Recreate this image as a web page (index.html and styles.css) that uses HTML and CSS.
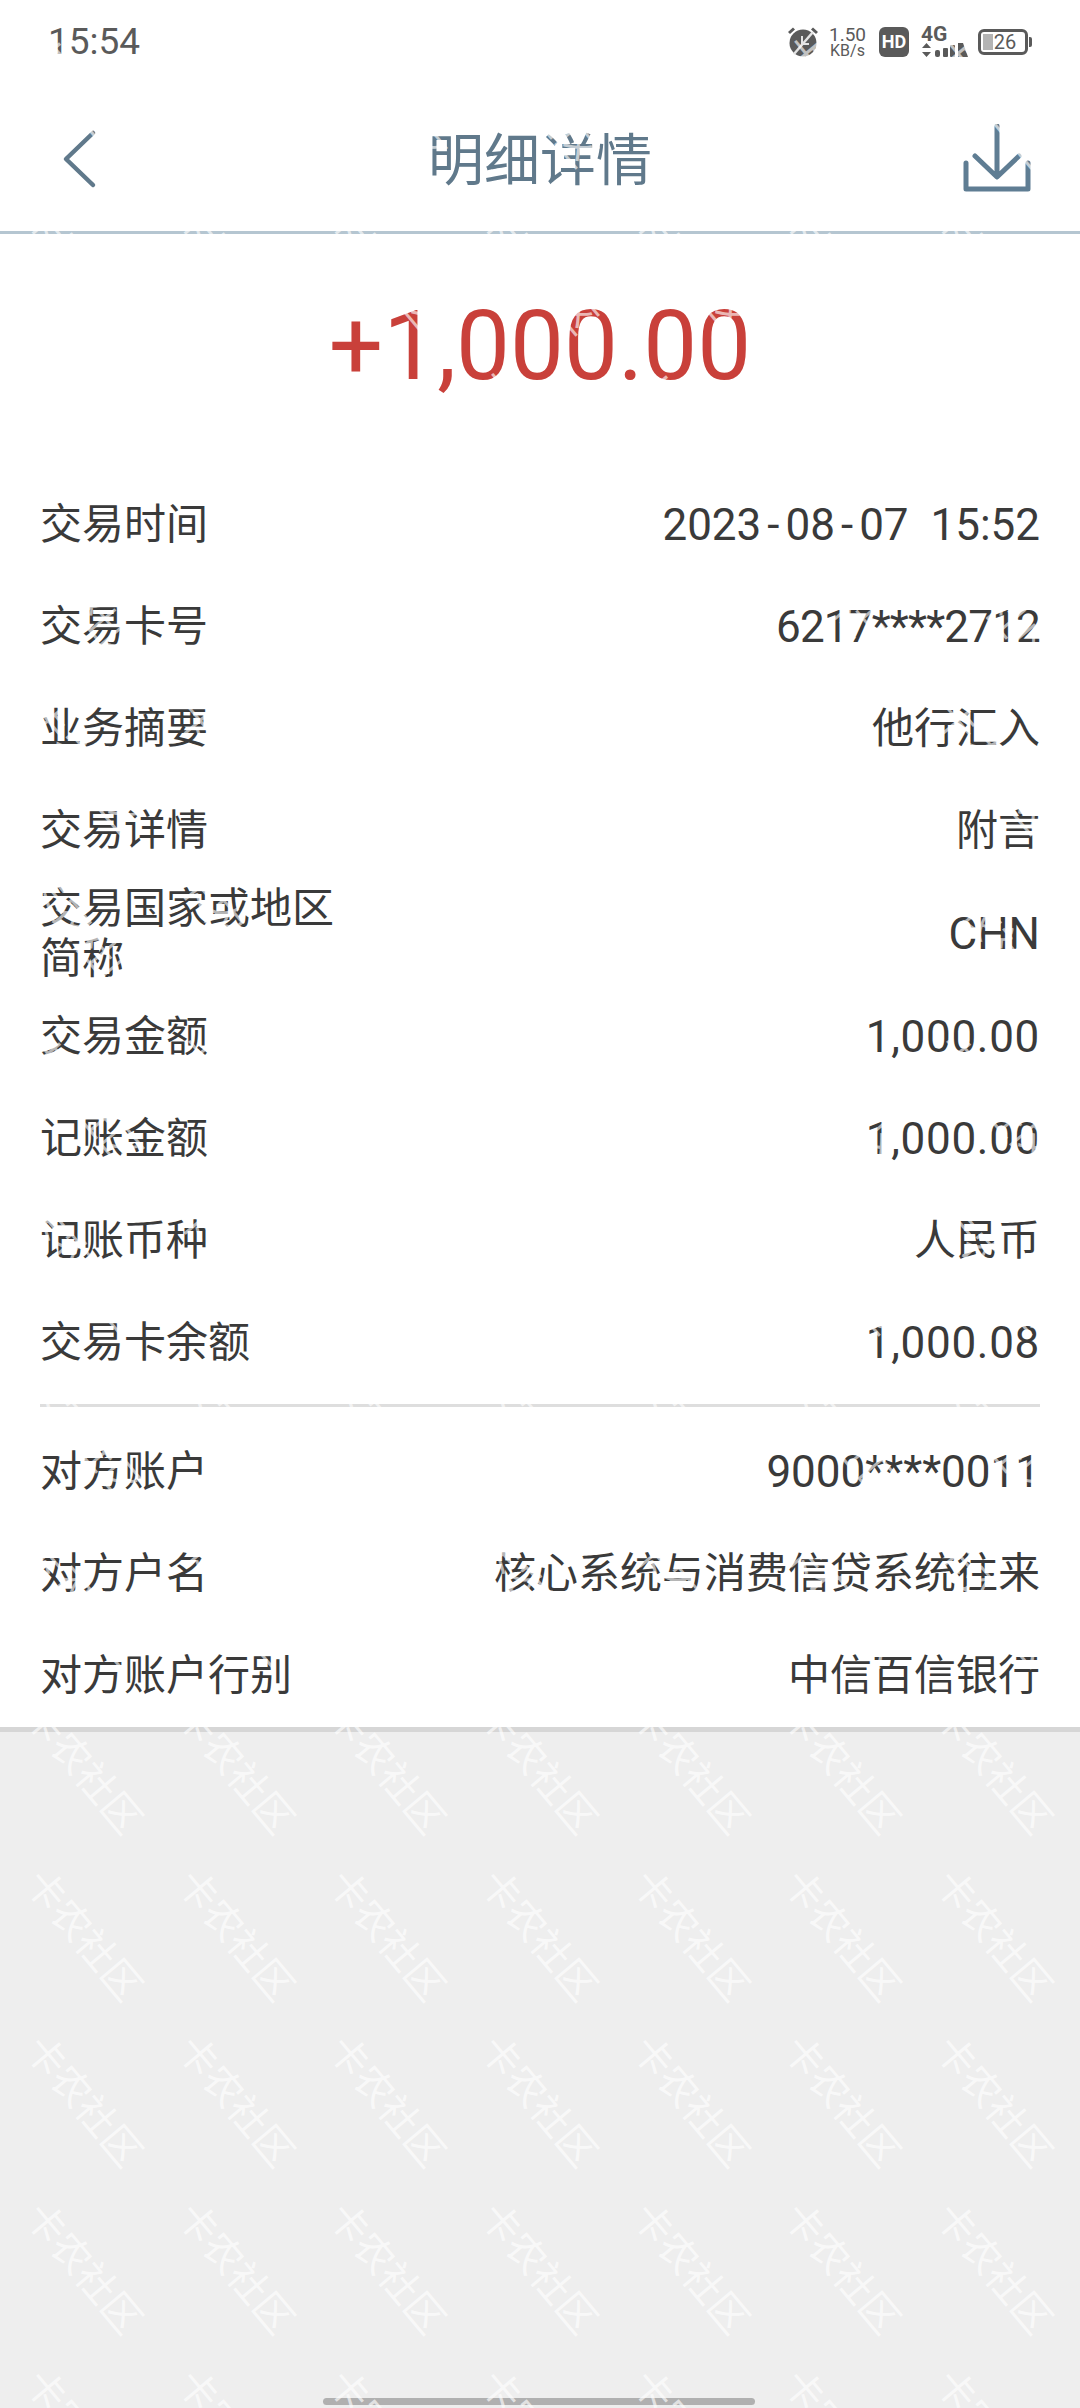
FILE: index.html
```html
<!DOCTYPE html>
<html lang="zh-CN">
<head>
    <meta charset="UTF-8">
    <meta name="viewport" content="width=device-width, initial-scale=1.0">
    <title>明细详情</title>
    <link rel="stylesheet" href="styles.css">
</head>
<body>
    <div class="page">
        <div class="status-bar">
            <span class="clock">15:54</span>
            <div class="status-icons">
                <svg class="alarm" width="30" height="30" viewBox="0 0 30 30">
                    <circle cx="15" cy="16" r="13.5" fill="#5a5a5a"/>
                    <path d="M1 6 L6 1.5 M29 6 L24 1.5" stroke="#5a5a5a" stroke-width="3" fill="none"/>
                    <path d="M6 27 L25 5" stroke="#e4e4e4" stroke-width="2.5" fill="none"/>
                    <path d="M14 9 V17 H21" stroke="#e4e4e4" stroke-width="2" fill="none"/>
                </svg>
                <div class="speed">
                    <span class="speed-num">1.50</span>
                    <span class="speed-unit">KB/s</span>
                </div>
                <span class="hd">HD</span>
                <div class="network">
                    <span class="net-type">4G</span>
                    <svg width="47" height="16" viewBox="0 0 47 16">
                        <path d="M1 6 L5.5 1 L10 6 Z M1 10 L5.5 15 L10 10 Z" fill="#5a5a5a"/>
                        <rect x="14" y="8" width="5" height="7" rx="2" fill="#5a5a5a"/>
                        <rect x="22" y="6" width="5" height="9" rx="1" fill="#5a5a5a"/>
                        <rect x="29" y="3" width="5" height="12" rx="1" fill="#5a5a5a"/>
                        <path d="M37 1 H42 L47 15 H37 Z" fill="#5a5a5a"/>
                    </svg>
                </div>
                <div class="battery">
                    <span class="battery-level"></span>
                    <span class="battery-num">26</span>
                </div>
            </div>
        </div>

        <div class="nav-bar">
            <svg class="back" width="40" height="60" viewBox="0 0 40 60">
                <path d="M34 4 L7 30 L34 56" fill="none" stroke="#60798b" stroke-width="4.5" stroke-linecap="round" stroke-linejoin="round"/>
            </svg>
            <h1 class="title">明细详情</h1>
            <svg class="download" width="70" height="70" viewBox="0 0 70 70">
                <path d="M34 2 V52 M12 32 L34 53 L56 32" fill="none" stroke="#5f7d93" stroke-width="5" stroke-linecap="round" stroke-linejoin="round"/>
                <path d="M3 39 V65 H65 V39" fill="none" stroke="#5f7d93" stroke-width="5" stroke-linecap="round" stroke-linejoin="round"/>
            </svg>
        </div>

        <div class="detail">
            <div class="amount">+1,000.00</div>

            <div class="rows">
                <div class="row"><span class="label">交易时间</span><span class="value num">2023<span class="dash">-</span>08<span class="dash">-</span>07  15:52</span></div>
                <div class="row"><span class="label">交易卡号</span><span class="value num tight">6217****2712</span></div>
                <div class="row"><span class="label">业务摘要</span><span class="value">他行汇入</span></div>
                <div class="row"><span class="label">交易详情</span><span class="value">附言</span></div>
                <div class="row"><span class="label">交易国家或地区简称</span><span class="value num">CHN</span></div>
                <div class="row"><span class="label">交易金额</span><span class="value num money">1,000.00</span></div>
                <div class="row"><span class="label">记账金额</span><span class="value num money">1,000.00</span></div>
                <div class="row"><span class="label">记账币种</span><span class="value">人民币</span></div>
                <div class="row"><span class="label">交易卡余额</span><span class="value num money">1,000.08</span></div>
            </div>

            <div class="divider"></div>

            <div class="rows">
                <div class="row"><span class="label">对方账户</span><span class="value num">9000****0011</span></div>
                <div class="row"><span class="label">对方户名</span><span class="value">核心系统与消费信贷系统往来</span></div>
                <div class="row"><span class="label">对方账户行别</span><span class="value">中信百信银行</span></div>
            </div>
        </div>

        <div class="home-bar"></div>
        <div class="watermark" id="watermark"></div>
    </div>
    <script src="watermark.js"></script>
</body>
</html>
```

FILE: styles.css
```css
* {
    box-sizing: border-box;
}

html, body {
    margin: 0;
    padding: 0;
}

body {
    font-family: Roboto, "Noto Sans CJK SC", sans-serif;
    background: #eeeeee;
}

.page {
    position: relative;
    width: 1080px;
    height: 2408px;
    overflow: hidden;
}

/* Status bar */
.status-bar {
    height: 84px;
    background: #fff;
    display: flex;
    justify-content: space-between;
    align-items: flex-start;
    padding: 20px 48px 0 48px;
    color: #5a5a5a;
}

.clock {
    font-size: 37px;
    line-height: 44px;
}

.status-icons {
    display: flex;
    align-items: center;
    height: 30px;
    margin-top: 7px;
    margin-right: 4px;
}

.speed {
    display: flex;
    flex-direction: column;
    align-items: center;
    margin-left: 11px;
    width: 37px;
}

.speed-num {
    font-size: 19px;
    line-height: 16px;
}

.speed-unit {
    font-size: 16px;
    line-height: 15px;
}

.hd {
    width: 30px;
    height: 30px;
    margin-left: 13px;
    border-radius: 6px;
    background: #5a5a5a;
    color: #fff;
    font-size: 18px;
    font-weight: 700;
    line-height: 30px;
    text-align: center;
}

.network {
    display: flex;
    flex-direction: column;
    margin-left: 12px;
    width: 47px;
}

.net-type {
    font-size: 21px;
    font-weight: 700;
    line-height: 15px;
}

.battery {
    position: relative;
    width: 50px;
    height: 26px;
    margin-left: 10px;
    border: 3px solid #5a5a5a;
    border-radius: 6px;
    text-align: center;
    font-size: 20px;
    line-height: 20px;
    padding-left: 4px;
}

/* nub on the right end of the battery */
.battery::after {
    content: "";
    position: absolute;
    right: -7px;
    top: 5px;
    width: 3px;
    height: 10px;
    background: #5a5a5a;
    border-radius: 0 2px 2px 0;
}

.battery-level {
    position: absolute;
    left: 2px;
    top: 2px;
    width: 10px;
    height: 16px;
    background: #b4b4b4;
}

.battery-num {
    position: relative;
}

/* Nav bar */
.nav-bar {
    height: 150px;
    background: #fff;
    border-bottom: 3px solid #b5c6d1;
    display: flex;
    align-items: center;
    justify-content: space-between;
    padding: 0 48px 0 59px;
    position: relative;
}

.back {
    margin-top: 2px;
}

.download {
    margin-right: -1px;
    margin-top: 2px;
}

.title {
    position: absolute;
    left: 0;
    right: 0;
    margin: 0;
    text-align: center;
    font-size: 56px;
    font-weight: 400;
    line-height: 72px;
    color: #60798b;
    margin-top: 6px;
}

/* Detail card */
.detail {
    background: #fff;
    border-bottom: 5px solid #d6d6d6;
    padding: 0 40px 0 40px;
}

.amount {
    height: 240px;
    padding-top: 60px;
    text-align: center;
    font-size: 96px;
    line-height: 104px;
    color: #c9403a;
}

.rows {
    display: flex;
    flex-direction: column;
}

.row {
    display: flex;
    justify-content: space-between;
    align-items: center;
    min-height: 102px;
    padding: 2px 0;
    font-size: 42px;
    line-height: 50px;
    color: #3a3a3a;
}

.label {
    max-width: 300px;
}

.value {
    text-align: right;
    white-space: pre;
}

/* Latin text and digits run a little larger than the Chinese text */
.num {
    font-size: 44px;
}

.tight {
    letter-spacing: -0.8px;
}

.money {
    letter-spacing: 0.7px;
}

.dash {
    margin: 0 6px;
}

.divider {
    height: 3px;
    margin: 10px 0 14px 0;
    background: #dedede;
}

/* Bottom gesture bar */
.home-bar {
    position: absolute;
    left: 323px;
    bottom: 3px;
    width: 432px;
    height: 7px;
    border-radius: 4px;
    background: #b0b0b0;
}

/* Repeated forum watermark, lies over the whole page */
.watermark {
    position: absolute;
    left: 10px;
    top: 16px;
    display: grid;
    grid-template-columns: repeat(7, 151.7px);
    grid-auto-rows: 166.7px;
    pointer-events: none;
}

.watermark span {
    display: flex;
    align-items: center;
    justify-content: center;
    font-family: "Noto Sans CJK SC", sans-serif;
    font-size: 39px;
    white-space: nowrap;
    color: rgba(255, 255, 255, 0.65);
    transform: rotate(50deg);
}
```

FILE: watermark.js
```js
// Fill the overlay with the repeated watermark text
var mark = document.getElementById('watermark');
for (var i = 0; i < 7 * 15; i++) {
    var span = document.createElement('span');
    span.textContent = '卡农社区';
    mark.appendChild(span);
}
```
